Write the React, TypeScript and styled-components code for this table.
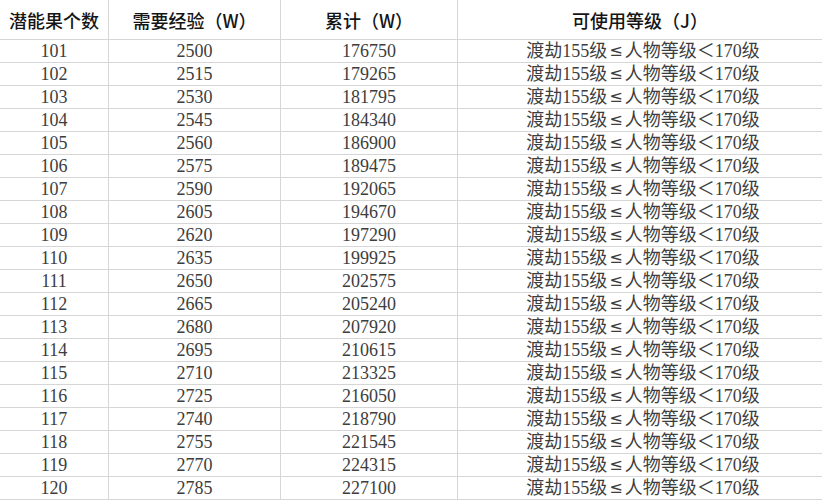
import React from 'react'
import styled, { createGlobalStyle } from 'styled-components'

const GlobalStyle = createGlobalStyle`
	* {
		box-sizing: border-box;
	}
	html, body {
		margin: 0;
		padding: 0;
		background: #ffffff;
	}
`

const headers = ['潜能果个数', '需要经验（W）', '累计（W）', '可使用等级（J）']

// 每级所需经验每次 +15，累计从 176750 开始
const rows = (() => {
	const list: { level: number; need: number; total: number }[] = []
	let total = 176750
	for (let i = 0; i < 20; i++) {
		const need = 2500 + i * 15
		if (i > 0) total += need
		list.push({ level: 101 + i, need, total })
	}
	return list
})()

export default function App() {
	return (
		<>
			<GlobalStyle />
			<Sheet>
				{headers.map((h, i) => (
					<HeadCell key={h} $last={i === headers.length - 1}>
						{h}
					</HeadCell>
				))}
				{rows.map((r) => (
					<React.Fragment key={r.level}>
						<Cell>{r.level}</Cell>
						<Cell>{r.need}</Cell>
						<Cell>{r.total}</Cell>
						<Cell $last>
							<span>渡劫155级</span>
							<Sym>≤</Sym>
							<span>人物等级＜170级</span>
						</Cell>
					</React.Fragment>
				))}
			</Sheet>
		</>
	)
}

const Sheet = styled.div`
	width: 822px;
	height: 500px;
	overflow: hidden;
	display: grid;
	grid-template-columns: 109px 172px 177px 1fr;
	grid-template-rows: 40px repeat(20, 23px);
	background: #ffffff;
`

const HeadCell = styled.div<{ $last?: boolean }>`
	display: flex;
	align-items: center;
	justify-content: center;
	font-family: 'Noto Sans CJK SC', 'Noto Sans', sans-serif;
	font-size: 18px;
	font-weight: 500;
	line-height: 1;
	color: #151515;
	border-bottom: 1px solid #d6d6d6;
	border-right: ${({ $last }) => ($last ? 'none' : '1px solid #d6d6d6')};
	padding-top: 1px;
`

const Cell = styled.div<{ $last?: boolean }>`
	display: flex;
	align-items: center;
	justify-content: center;
	font-family: 'Liberation Serif', 'Noto Sans CJK SC', serif;
	font-size: 18px;
	line-height: 1;
	color: #3d3d3d;
	white-space: nowrap;
	border-bottom: 1px solid #d6d6d6;
	border-right: ${({ $last }) => ($last ? 'none' : '1px solid #d6d6d6')};
	padding-left: ${({ $last }) => ($last ? '6px' : '0')};
`

const Sym = styled.span`
	font-family: 'DejaVu Sans', sans-serif;
	font-size: 16px;
	margin: 0 2px;
	line-height: 1;
`
